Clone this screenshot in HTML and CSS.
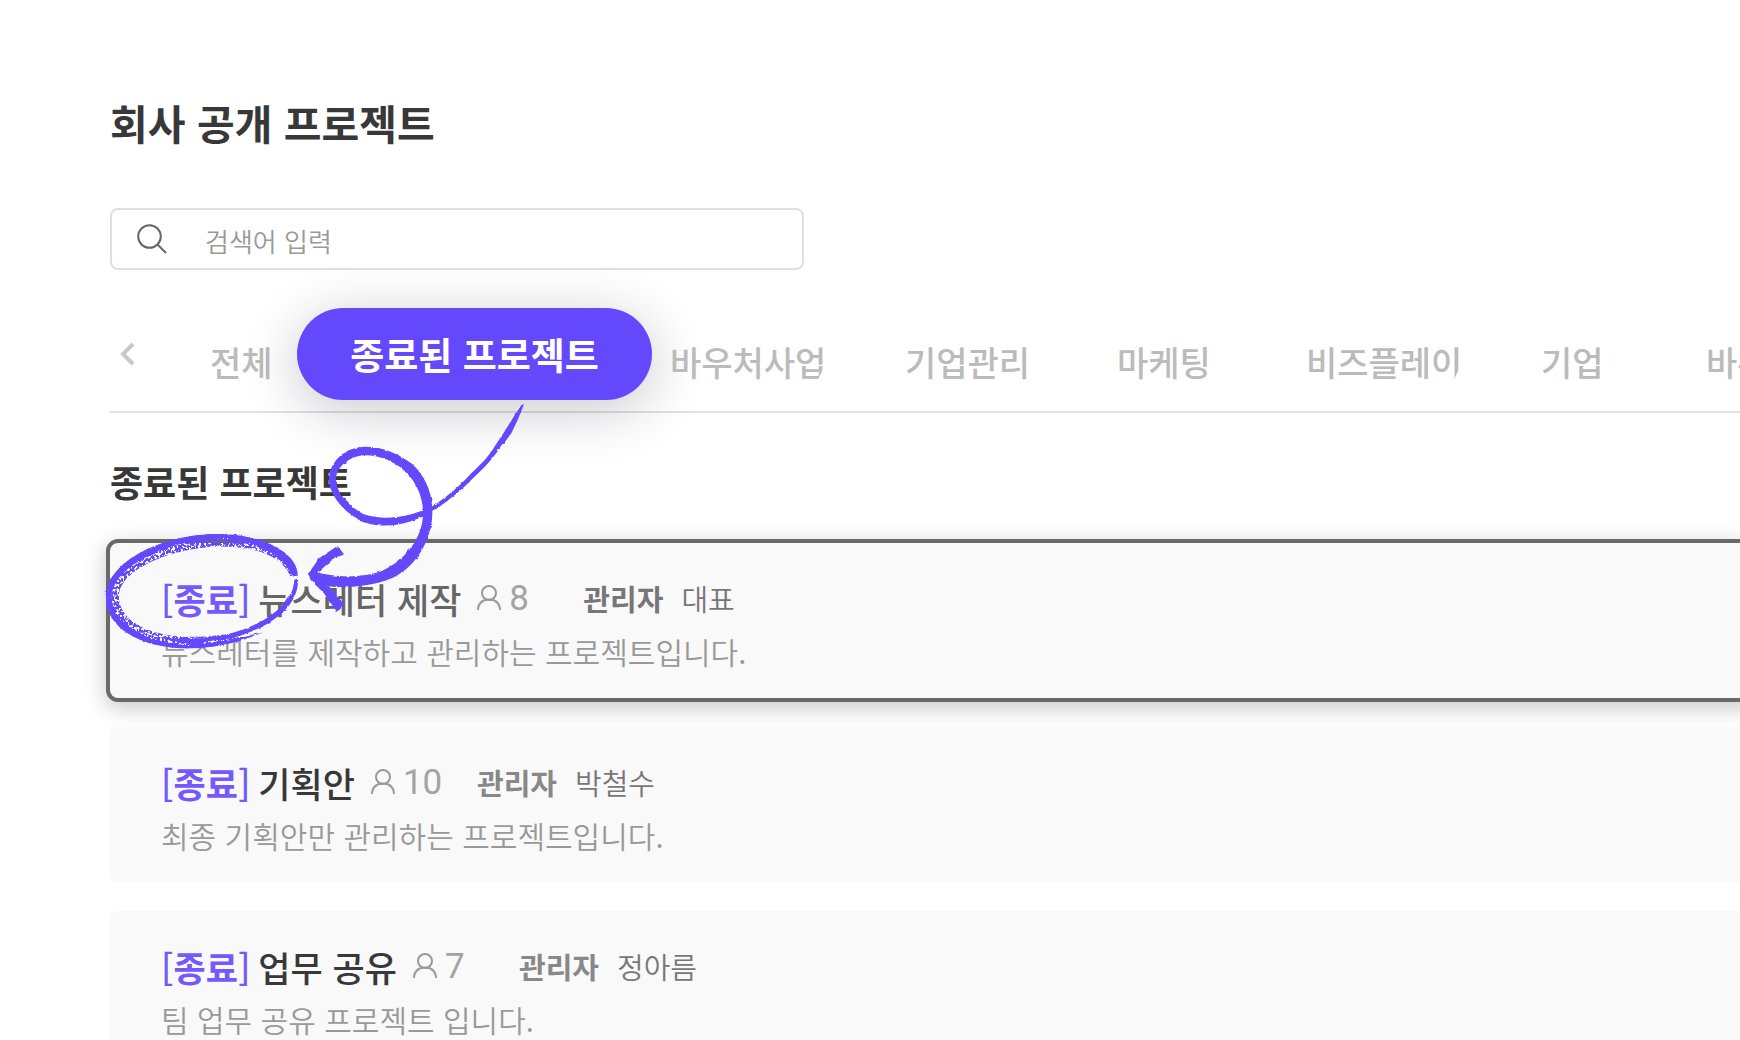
FILE: index.html
```html
<!DOCTYPE html>
<html lang="ko">
<head>
    <meta charset="UTF-8">
    <title>회사 공개 프로젝트</title>
    <link rel="stylesheet" href="styles.css">
</head>
<body>
    <!-- shared icon -->
    <svg width="0" height="0" class="defs">
        <symbol id="user" viewBox="0 0 24 26">
            <circle cx="12" cy="8" r="7" />
            <path d="M1 25C1 18 6 14.500 12 14.500S23 18 23 25" />
        </symbol>
    </svg>

    <div class="page">
        <h1 class="page-title">회사 공개 프로젝트</h1>

        <form class="search">
            <label for="keyword" aria-label="검색">
                <svg class="search-icon" viewBox="0 0 30 30">
                    <circle cx="12.500" cy="12.500" r="11.300" />
                    <path d="M20.500 20.500L29 29" />
                </svg>
            </label>
            <input type="text" id="keyword" name="keyword" placeholder="검색어 입력">
        </form>

        <nav class="tabs">
            <button class="tab-prev" aria-label="이전">
                <svg viewBox="0 0 16 24"><path d="M13 2L3 12L13 22" /></svg>
            </button>
            <button class="tab tab-first">전체</button>
            <button class="tab-active">종료된 프로젝트</button>
            <button class="tab tab-5"><span class="cut">바우처사업</span></button>
            <button class="tab tab-4">기업관리</button>
            <button class="tab tab-3">마케팅</button>
            <button class="tab tab-5"><span class="cut">비즈플레이</span></button>
            <button class="tab tab-2">기업</button>
            <button class="tab tab-5">바우처사업</button>
        </nav>

        <h2 class="list-title">종료된 프로젝트</h2>

        <div class="list">
            <div class="item selected">
                <div class="item-head">
                    <span class="badge">[<b>종료</b>]</span>
                    <span class="item-name">뉴스레터 제작</span>
                    <span class="members"><svg class="user-icon"><use href="#user" /></svg>8</span>
                    <span class="role">관리자</span>
                    <span class="manager">대표</span>
                </div>
                <p class="item-desc">뉴스레터를 제작하고 관리하는 프로젝트입니다.</p>

                <svg class="mark-circle" viewBox="40 30 600 370">
                    <defs>
                        <filter id="brush" x="-5%" y="-5%" width="110%" height="110%">
                            <feTurbulence type="fractalNoise" baseFrequency="0.06" numOctaves="3" seed="4" result="noise" />
                            <feDisplacementMap in="SourceGraphic" in2="noise" scale="8" xChannelSelector="R" yChannelSelector="G" />
                        </filter>
                        <filter id="chalk" x="-5%" y="-5%" width="110%" height="110%">
                            <feTurbulence type="fractalNoise" baseFrequency="0.13" numOctaves="3" seed="9" />
                            <feColorMatrix values="0 0 0 0 0  0 0 0 0 0  0 0 0 0 0  12 0 0 0 -5" result="grain" />
                            <feComposite in="SourceGraphic" in2="grain" operator="in" />
                        </filter>
                    </defs>
                    <g filter="url(#chalk)">
                        <path class="fill" d="M622 168C618 90 500 40 370 42C215 45 45 125 45 232C45 325 150 387 300 386C385 384 420 370 455 355C430 350 420 345 400 344C230 370 88 325 84 232C84 155 220 90 375 80C480 78 570 100 600 170Z" />
                    </g>
                    <g filter="url(#brush)">
                        <path class="fill" d="M622 164C618 90 500 40 370 42C215 45 45 125 45 232C45 325 150 387 300 386C385 384 460 365 515 338C455 354 400 368 340 372C330 366 360 362 400 360C500 340 625 280 623 178C612 176 612 180 611 190C600 265 500 325 400 346C330 360 260 362 200 352C250 366 300 374 320 376C190 380 64 320 62 232C60 150 210 66 370 56C480 54 585 100 604 170Z" />
                    </g>
                </svg>
            </div>

            <div class="item">
                <div class="item-head">
                    <span class="badge">[<b>종료</b>]</span>
                    <span class="item-name">기획안</span>
                    <span class="members"><svg class="user-icon"><use href="#user" /></svg>10</span>
                    <span class="role">관리자</span>
                    <span class="manager">박철수</span>
                </div>
                <p class="item-desc">최종 기획안만 관리하는 프로젝트입니다.</p>
            </div>

            <div class="item">
                <div class="item-head">
                    <span class="badge">[<b>종료</b>]</span>
                    <span class="item-name">업무 공유</span>
                    <span class="members"><svg class="user-icon"><use href="#user" /></svg>7</span>
                    <span class="role">관리자</span>
                    <span class="manager">정아름</span>
                </div>
                <p class="item-desc">팀 업무 공유 프로젝트 입니다.</p>
            </div>
        </div>

        <!-- arrow from the tab to the first item -->
        <svg class="mark-arrow" viewBox="0 0 780 720">
            <g filter="url(#brush)">
                <path class="fill" d="M668 40L672 42C660 75 648 102 634 130C618 152 602 172 584 196C566 220 546 240 522 262C488 298 448 330 410 356L394 362L392 352C440 322 480 287 508 256C535 230 555 212 572 187C598 149 623 110 640 82Z" />
                <path class="fill" d="M400 360C340 404 250 420 190 395C130 370 86 310 87 268C88 211 140 168 200 170C255 171 302 196 334 220C374 256 392 300 396 345C406 440 347 534 277 564C215 590 130 598 60 586L23 555L38 543C110 566 190 563 245 543C320 510 368 440 369 372C371 320 345 265 300 231C265 206 225 194 190 196C150 200 107 230 108 270C110 313 150 350 190 372C250 393 320 380 360 364Z" />
                <path class="fill" d="M24 552L58 504L112 468L134 494L106 502L52 548L70 580L94 596L132 643L108 667L72 610L32 570Z" />
            </g>
        </svg>
    </div>
</body>
</html>
```
FILE: styles.css
```css
* {
    box-sizing: border-box;
}

body {
    margin: 0;
    font-family: "Noto Sans CJK KR", sans-serif;
    background-color: #fff;
    color: #383838;
}

button {
    border: none;
    background: none;
    padding: 0;
    font-family: inherit;
    cursor: pointer;
}

.defs {
    position: absolute;
}

.page {
    position: relative;
    height: 100vh;
    padding: 92px 0 0 110px;
    overflow: hidden;
}

.page-title {
    margin: 0 0 56px;
    font-size: 41px;
    line-height: 60px;
    font-weight: 700;
}

/* search box */
.search {
    display: flex;
    align-items: center;
    width: 694px;
    height: 62px;
    padding: 0 25px;
    border: 2px solid #e0e0e0;
    border-radius: 8px;
}

.search label {
    display: flex;
}

.search-icon {
    width: 30px;
    height: 30px;
    margin-right: 38px;
    fill: none;
    stroke: #666;
    stroke-width: 2;
}

.search input {
    flex: 1;
    border: none;
    outline: none;
    background: none;
    padding: 2px 0 0;
    font-family: inherit;
    font-size: 26px;
    font-weight: 350;
    color: #383838;
}

.search input::placeholder {
    color: #999;
}

/* category tabs */
.tabs {
    display: flex;
    align-items: center;
    height: 143px;
    padding-top: 26px;
    border-bottom: 2px solid #e0e0e0;
    white-space: nowrap;
}

.tab-prev {
    flex: none;
    width: 100px;
    height: 24px;
    padding-left: 10px;
    text-align: left;
}

.tab-prev svg {
    display: block;
    width: 16px;
    height: 24px;
    fill: none;
    stroke: #c8c8c8;
    stroke-width: 4;
}

.tab {
    flex: none;
    padding-top: 16px;
    font-size: 34px;
    line-height: 50px;
    font-weight: 500;
    color: #bbb;
    text-align: left;
}

.tab-first {
    width: 87px;
}

.tab-2 {
    width: 165px;
}

.tab-3 {
    width: 189px;
}

.tab-4 {
    width: 212px;
}

.tab-5 {
    width: 235px;
}

/* long names end under a slanted edge */
.cut {
    display: inline-block;
    clip-path: polygon(0 0, calc(100% - 3px) 0, calc(100% - 3px) 64%, calc(100% - 12px) 100%, 0 100%);
}

.tab-active {
    position: relative;
    flex: none;
    width: 355px;
    height: 92px;
    margin-right: 18px;
    border-radius: 46px;
    background-color: #6449fc;
    box-shadow: 0 10px 54px rgba(30, 30, 50, 0.24);
    color: #fff;
    font-size: 37px;
    line-height: 56px;
    font-weight: 700;
}

/* project list */
.list-title {
    margin: 41px 0 35px;
    font-size: 36px;
    line-height: 54px;
    font-weight: 700;
}

.list {
    display: flex;
    flex-direction: column;
    gap: 29px;
    margin-right: -12px;
}

.item {
    position: relative;
    height: 155px;
    padding: 28px 51px 0;
    border-radius: 8px;
    background-color: #f9f9f9;
}

.item-head {
    display: flex;
    align-items: center;
    height: 54px;
    white-space: nowrap;
}

.badge {
    margin-right: 8px;
    font-size: 35px;
    font-weight: 500;
    color: #7459fc;
}

.item-name {
    margin-right: 16px;
    font-size: 35px;
    font-weight: 500;
}

.members {
    display: flex;
    align-items: center;
    width: 106px;
    font-family: Roboto, sans-serif;
    font-size: 35px;
    font-weight: 400;
    color: #a3a3a3;
}

.user-icon {
    width: 24px;
    height: 26px;
    margin-right: 8px;
    fill: none;
    stroke: #999;
    stroke-width: 2;
    overflow: visible;
}

.role {
    margin-right: 18px;
    font-size: 29px;
    font-weight: 700;
    color: #888;
}

.manager {
    font-size: 29px;
    font-weight: 350;
    color: #777;
}

.item-desc {
    margin: 0;
    font-size: 30px;
    line-height: 52px;
    font-weight: 350;
    color: #999;
}

.selected {
    outline: 4px solid #696969;
    box-shadow: 0 6px 22px 4px rgba(0, 0, 0, 0.22);
}

.selected .item-name {
    color: #666;
}

.selected .role {
    color: #777;
}

/* hand-drawn marks */
.mark-circle {
    position: absolute;
    left: -6px;
    top: -13px;
    width: 200px;
    height: 123px;
}

.mark-arrow {
    position: absolute;
    left: 300px;
    top: 390px;
    width: 260px;
    height: 240px;
    pointer-events: none;
}

.fill {
    fill: #6449fc;
}
```
